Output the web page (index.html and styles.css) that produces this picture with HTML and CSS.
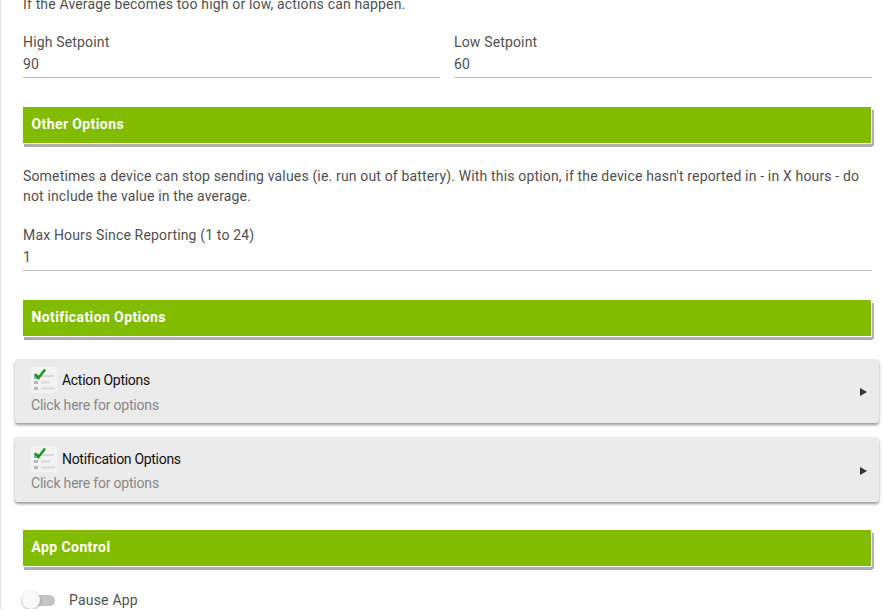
FILE: index.html
```html
<!DOCTYPE html>
<html lang="en">
<head>
<meta charset="utf-8">
<title>App settings</title>
<link rel="stylesheet" href="styles.css">
</head>
<body>
<main class="page">
  <p class="intro">If the Average becomes too high or low, actions can happen.</p>
  <div class="two-col">
    <div class="field"><label class="field-label">High Setpoint</label><div class="field-value">90</div></div>
    <div class="field"><label class="field-label">Low Setpoint</label><div class="field-value">60</div></div>
  </div>
  <h2 class="section first">Other Options</h2>
  <p class="para">Sometimes a device can stop sending values (ie. run out of battery). With this option, if the device hasn't reported in - in X hours - do not include the value in the average.</p>
  <div class="field"><label class="field-label">Max Hours Since Reporting (1 to 24)</label><div class="field-value">1</div></div>
  <h2 class="section second">Notification Options</h2>
  <div class="cards">
    <a class="card">
      <div class="card-title">
        <svg class="card-icon" viewBox="0 0 26 26" aria-hidden="true">
          <rect width="26" height="26" rx="2" fill="#f3f3f3"/>
          <rect x="3" y="8" width="5" height="4" fill="#7fa6cc"/>
          <rect x="10" y="8" width="13" height="2" fill="#d8d8d8"/>
          <rect x="3" y="14" width="4" height="3" fill="#b8b8b8"/>
          <rect x="10" y="14.500" width="9" height="2" fill="#d8d8d8"/>
          <rect x="3" y="20" width="4" height="3" fill="#b8b8b8"/>
          <rect x="10" y="20.500" width="14" height="2" fill="#d8d8d8"/>
          <path d="M4 7 L7.500 11 L14 2.500" fill="none" stroke="#149a1c" stroke-width="2.400"/>
        </svg>
        <span>Action Options</span>
      </div>
      <div class="card-sub">Click here for options</div>
      <span class="arrow"></span>
    </a>
    <a class="card">
      <div class="card-title">
        <svg class="card-icon" viewBox="0 0 26 26" aria-hidden="true">
          <rect width="26" height="26" rx="2" fill="#f3f3f3"/>
          <rect x="3" y="8" width="5" height="4" fill="#7fa6cc"/>
          <rect x="10" y="8" width="13" height="2" fill="#d8d8d8"/>
          <rect x="3" y="14" width="4" height="3" fill="#b8b8b8"/>
          <rect x="10" y="14.500" width="9" height="2" fill="#d8d8d8"/>
          <rect x="3" y="20" width="4" height="3" fill="#b8b8b8"/>
          <rect x="10" y="20.500" width="14" height="2" fill="#d8d8d8"/>
          <path d="M4 7 L7.500 11 L14 2.500" fill="none" stroke="#149a1c" stroke-width="2.400"/>
        </svg>
        <span>Notification Options</span>
      </div>
      <div class="card-sub">Click here for options</div>
      <span class="arrow"></span>
    </a>
  </div>
  <h2 class="section third">App Control</h2>
  <div class="toggle-row">
    <span class="toggle"><span class="knob"></span></span>
    <span class="toggle-label">Pause App</span>
  </div>
</main>
</body>
</html>
```

FILE: styles.css
```css
html, body {
  margin: 0;
  height: 609px;
  overflow: hidden;
  background: #fff;
}
.page {
  box-sizing: border-box;
  height: 640px;
  margin-top: -6px;
  padding: 0 12px 0 22px;
  border-left: 1px solid #e4e4e4;
  font-family: Roboto, sans-serif;
  font-size: 14px;
  line-height: 20px;
  letter-spacing: 0.16px;
  color: #505050;
}
.intro { margin: 0; }
.two-col {
  display: grid;
  grid-template-columns: 417px 1fr;
  gap: 14px;
  margin-top: 18px;
}
.field-label { display: block; height: 21px; line-height: 21px; }
.field-value {
  height: 22px;
  padding-bottom: 2px;
  line-height: 22px;
  border-bottom: 1px solid #bdbdbd;
}
.section {
  margin: 0 1px 0 0;
  height: 36px;
  line-height: 34px;
  padding-left: 8.500px;
  background: #82bc00;
  color: #fff;
  font-size: 14px;
  font-weight: 700;
  letter-spacing: 0.4px;
  box-shadow: 1px 1px 0 #fff, 3px 3px 0 #b0b0b0, 1px 4px 0 #aaa;
}
.first { margin-top: 29px; }
.second { margin-top: 29px; }
.third { margin-top: 28px; }
.para { margin: 23px 0 19px; }
.cards {
  display: flex;
  flex-direction: column;
  gap: 14px;
  margin: 23px -7px 0 -8px;
}
.card {
  position: relative;
  display: block;
  height: 64px;
  padding: 8px 16px 0;
  box-sizing: border-box;
  background: #ebebeb;
  border-radius: 3px;
  box-shadow: 0 2px 3px rgba(0, 0, 0, 0.4);
}
.card + .card { height: 65px; padding-top: 9px; }
.card-title {
  display: flex;
  align-items: center;
  gap: 5px;
  height: 25px;
  color: #111;
  letter-spacing: -0.3px;
}
.card-icon { width: 26px; height: 26px; flex: none; }
.card-sub { margin-top: 3px; color: #888; letter-spacing: -0.2px; }
.card + .card .card-sub { margin-top: 2px; }
.arrow {
  position: absolute;
  right: 12px;
  top: 29px;
  width: 0;
  height: 0;
  border-left: 7px solid #333;
  border-top: 4px solid transparent;
  border-bottom: 4px solid transparent;
}
.card + .card .arrow { top: 30px; }
.toggle-row {
  display: flex;
  align-items: center;
  margin-top: 24px;
  height: 20px;
}
.toggle {
  position: relative;
  width: 22px;
  height: 11px;
  margin-left: 10px;
  border-radius: 6px;
  background: #c4c4c4;
}
.knob {
  position: absolute;
  left: -11px;
  top: -3.500px;
  width: 18px;
  height: 18px;
  border-radius: 50%;
  background: #f9f9f9;
  box-shadow: 0 1px 3px rgba(0, 0, 0, 0.3);
}
.toggle-label { margin-left: 14px; letter-spacing: 0.2px; }
```
